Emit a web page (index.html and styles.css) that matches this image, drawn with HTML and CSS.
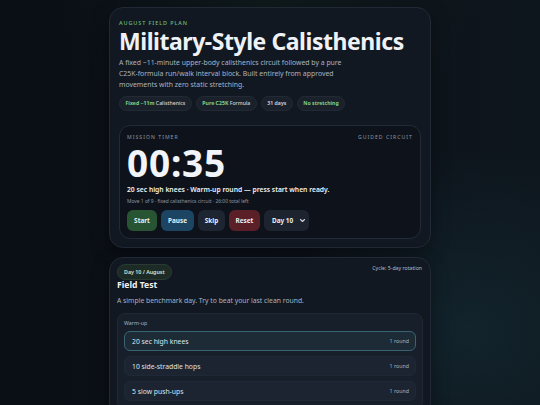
FILE: index.html
```html
<!DOCTYPE html>
<html>
<head>
<meta charset="utf-8">
<link rel="stylesheet" href="styles.css">
</head>
<body>
<main class="page">
  <section class="card hero">
    <div class="eyebrow">August Field Plan</div>
    <h1 class="title">Military-Style Calisthenics</h1>
    <p class="lead">A fixed ~11-minute upper-body calisthenics circuit followed by a pure C25K-formula run/walk interval block. Built entirely from approved movements with zero static stretching.</p>
    <div class="pills">
      <span class="pill"><b>Fixed ~11m</b> Calisthenics</span>
      <span class="pill"><b>Pure C25K</b> Formula</span>
      <span class="pill plain">31 days</span>
      <span class="pill"><b>No stretching</b></span>
    </div>
    <div class="timer">
      <div class="timer-head">
        <span>Mission Timer</span>
        <span>Guided Circuit</span>
      </div>
      <div class="clock">00:35</div>
      <div class="now">20 sec high knees · Warm-up round — press start when ready.</div>
      <div class="meta">Move 1 of 9 · fixed calisthenics circuit · 26:00 total left</div>
      <div class="controls">
        <button class="btn start">Start</button>
        <button class="btn pause">Pause</button>
        <button class="btn skip">Skip</button>
        <button class="btn reset">Reset</button>
        <button class="btn select"><span>Day 10</span><svg width="7" height="5" viewBox="0 0 7 5"><path d="M1.5 1.5 L3.5 3.5 L5.5 1.5" fill="none" stroke="#c9d1dc" stroke-width="1.1" stroke-linecap="round" stroke-linejoin="round"/></svg></button>
      </div>
    </div>
  </section>

  <section class="card day">
    <div class="day-head">
      <span class="day-pill">Day 10 / August</span>
      <span class="cycle">Cycle: 5-day rotation</span>
    </div>
    <h2 class="day-title">Field Test</h2>
    <p class="day-desc">A simple benchmark day. Try to beat your last clean round.</p>
    <div class="block">
      <div class="block-label">Warm-up</div>
      <div class="rows">
        <div class="row active"><span>20 sec high knees</span><span class="qty">1 round</span></div>
        <div class="row"><span>10 side-straddle hops</span><span class="qty">1 round</span></div>
        <div class="row"><span>5 slow push-ups</span><span class="qty">1 round</span></div>
      </div>
    </div>
  </section>
</main>
</body>
</html>
```

FILE: styles.css
```css
* { box-sizing: border-box; }
html, body { margin: 0; padding: 0; }
body {
  width: 540px;
  height: 405px;
  overflow: hidden;
  font-family: "Noto Sans", "Open Sans", sans-serif;
  color: #e6ebf2;
  background:
    radial-gradient(ellipse 260px 260px at 470px 330px, rgba(22, 48, 58, 0.55), transparent 70%),
    radial-gradient(ellipse 300px 200px at 270px 0px, rgba(20, 40, 30, 0.35), transparent 70%),
    linear-gradient(90deg, #0a0e15 0%, #0c1119 50%, #0e161d 100%);
}
.page {
  width: 322px;
  margin: 0 auto;
  padding-top: 7px;
  display: flex;
  flex-direction: column;
  gap: 9px;
}
.card {
  background: #121821;
  border: 1px solid #212936;
  border-radius: 14px;
  box-shadow: 0 6px 18px rgba(0,0,0,0.35);
}
.hero { padding: 12px 9px 8px 9px; }
.eyebrow {
  font-size: 5.5px;
  letter-spacing: 0.9px;
  text-transform: uppercase;
  color: #6fbf7f;
  font-weight: 500;
  line-height: 7px;
}
.title {
  margin: 1px 0 0 0;
  font-size: 23px;
  line-height: 26px;
  font-weight: 700;
  color: #eef2f7;
  letter-spacing: -0.45px;
  white-space: nowrap;
}
.lead {
  margin: 2.5px 0 0 0;
  width: 228px;
  font-size: 6.9px;
  line-height: 11px;
  color: #a9b3c1;
}
.pills { display: flex; gap: 4px; margin-top: 6.5px; }
.pill {
  height: 15px;
  padding: 0 5.5px;
  display: inline-block;
  line-height: 13px;
  border-radius: 8px;
  background: #1a212b;
  border: 1px solid #222a35;
  font-size: 5.2px;
  color: #cfd6df;
  font-weight: 500;
  white-space: nowrap;
}
.pill b { color: #7fd08c; font-weight: 700; }
.pill.plain { color: #d7dde6; font-weight: 600; }
.timer {
  margin-top: 14px;
  border: 1px solid #212a36;
  border-radius: 11px;
  background: #0e131b;
  padding: 8px 7px 7px 7px;
}
.timer-head {
  display: flex;
  justify-content: space-between;
  font-size: 5.2px;
  letter-spacing: 1px;
  text-transform: uppercase;
  color: #8b95a3;
  line-height: 7px;
}
.clock {
  font-size: 37px;
  font-weight: 700;
  line-height: 36px;
  margin-top: 4px;
  color: #f1f4f8;
  letter-spacing: 0.8px;
}
.now {
  margin-top: 4px;
  font-size: 6.75px;
  font-weight: 600;
  color: #eef2f6;
  line-height: 10px;
}
.meta {
  font-size: 4.9px;
  color: #8c96a4;
  line-height: 8px;
  margin-top: 2px;
}
.controls { display: flex; gap: 4px; margin-top: 5px; }
.btn {
  height: 21px;
  border: none;
  border-radius: 6px;
  padding: 0;
  font-family: inherit;
  font-size: 6.4px;
  font-weight: 700;
  color: #e8edf3;
  display: inline-flex;
  align-items: center;
  justify-content: center;
  white-space: nowrap;
}
.start { background: #275533; width: 30px; }
.pause { background: #1c4563; width: 33px; }
.skip { background: #1e2532; width: 27px; }
.reset { background: #5a1f27; width: 31px; }
.select { background: #1d2430; width: 45px; justify-content: flex-start; padding-left: 8px; gap: 6px; }

.day { padding: 6px 7px 0 7px; height: 160px; }
.day-head { display: flex; justify-content: space-between; align-items: flex-start; }
.day-pill {
  height: 16px;
  padding: 0 6px;
  display: inline-block;
  line-height: 14px;
  border-radius: 8px;
  background: #1d2b26;
  border: 1px solid #2a3a33;
  font-size: 5.3px;
  font-weight: 600;
  color: #d9e2dc;
}
.cycle { font-size: 5.2px; color: #b3bcc8; margin-top: 0; margin-right: 1px; line-height: 8px; }
.day-title {
  margin: 0;
  font-size: 8.6px;
  line-height: 11px;
  font-weight: 700;
  color: #eef2f6;
}
.day-desc {
  margin: 5px 0 0 0;
  font-size: 6.8px;
  line-height: 10px;
  color: #a9b3c1;
}
.block {
  margin-top: 7px;
  background: #17202a;
  border: 1px solid #1f2833;
  border-radius: 8px;
  padding: 5px 6px 8px 6px;
}
.block-label { font-size: 5.3px; color: #a9b3c1; line-height: 8px; }
.rows { display: flex; flex-direction: column; gap: 5px; margin-top: 4px; }
.row {
  height: 20px;
  border-radius: 6px;
  background: #1b2430;
  border: 1px solid #1f2935;
  display: flex;
  justify-content: space-between;
  align-items: center;
  padding: 0 6px 0 7px;
  font-size: 6.8px;
  color: #dfe5ec;
}
.row.active { background: #1c2b36; border-color: #3b6272; }
.qty { font-size: 5.3px; color: #a9b3c1; }
```
